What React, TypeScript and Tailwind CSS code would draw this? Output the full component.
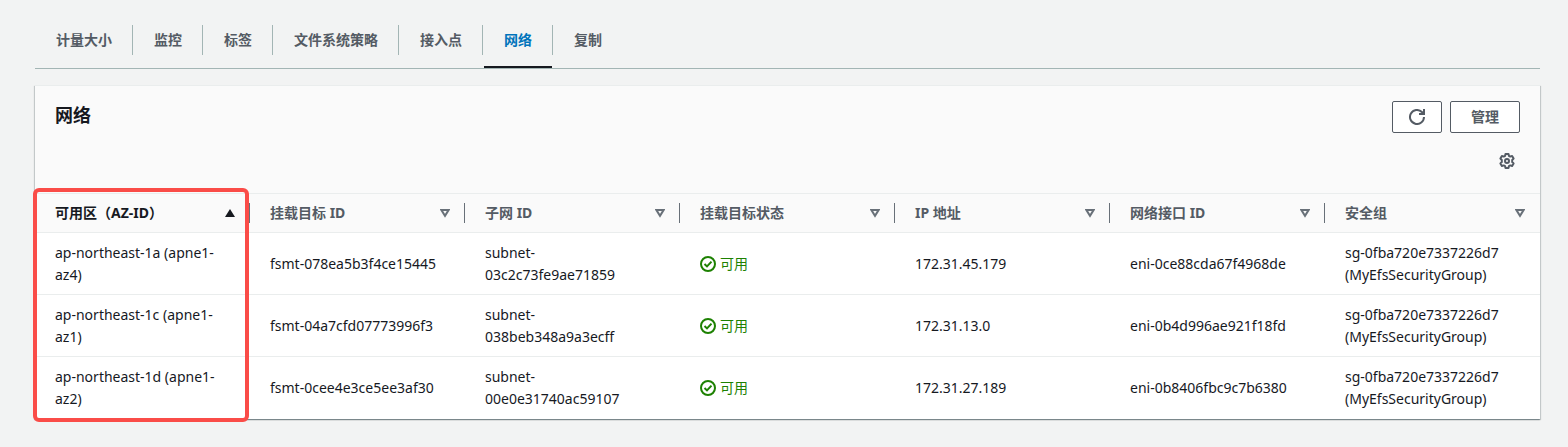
import React from 'react';
import clsx from 'clsx';

const tabs = ['计量大小', '监控', '标签', '文件系统策略', '接入点', '网络', '复制'];

const columns = ['可用区（AZ-ID）', '挂载目标 ID', '子网 ID', '挂载目标状态', 'IP 地址', '网络接口 ID', '安全组'];

const mountTargets = [
  {
    zone: 'ap-northeast-1a (apne1-az4)',
    id: 'fsmt-078ea5b3f4ce15445',
    subnet: 'subnet-03c2c73fe9ae71859',
    ip: '172.31.45.179',
    eni: 'eni-0ce88cda67f4968de',
  },
  {
    zone: 'ap-northeast-1c (apne1-az1)',
    id: 'fsmt-04a7cfd07773996f3',
    subnet: 'subnet-038beb348a9a3ecff',
    ip: '172.31.13.0',
    eni: 'eni-0b4d996ae921f18fd',
  },
  {
    zone: 'ap-northeast-1d (apne1-az2)',
    id: 'fsmt-0cee4e3ce5ee3af30',
    subnet: 'subnet-00e0e31740ac59107',
    ip: '172.31.27.189',
    eni: 'eni-0b8406fbc9c7b6380',
  },
];

function RefreshIcon() {
  return (
    <svg className="h-4 w-4" viewBox="0 0 16 16" fill="none" stroke="currentColor" strokeWidth="2" aria-hidden="true">
      <path d="M15 8a7 7 0 1 1-2.1-5L15 5" />
      <path d="M10 5h5V0" />
    </svg>
  );
}

function GearIcon() {
  return (
    <svg className="h-4 w-4" viewBox="0 0 16 16" fill="none" stroke="currentColor" strokeWidth="2" strokeLinejoin="round" aria-hidden="true">
      <path d="M6.5 1h3l.4 1.8 1.4.8 1.8-.6 1.5 2.6L13.2 7v2l1.4 1.4-1.5 2.6-1.8-.6-1.4.8-.4 1.8h-3l-.4-1.8-1.4-.8-1.8.6-1.5-2.6L2.8 9V7L1.4 5.6 2.9 3l1.8.6 1.4-.8z" />
      <circle cx="8" cy="8" r="2" />
    </svg>
  );
}

function CheckIcon() {
  return (
    <svg className="h-4 w-4 shrink-0" viewBox="0 0 16 16" fill="none" stroke="currentColor" strokeWidth="2" aria-hidden="true">
      <circle cx="8" cy="8" r="7" />
      <path d="M4.5 8 7 10.4 11.5 5.6" />
    </svg>
  );
}

function SortIcon({ active }: { active: boolean }) {
  return (
    <svg className="h-2.5 w-2.5 shrink-0" viewBox="0 0 10 10" aria-hidden="true">
      {active ? (
        <path d="M5 1l5 8H0z" fill="currentColor" />
      ) : (
        <path d="M1.4 2h7.2L5 7.8z" fill="none" stroke="#687078" strokeWidth="2" />
      )}
    </svg>
  );
}

function Tabs() {
  return (
    <nav className="flex border-b border-[#a3b5b4] pt-[25px]">
      {tabs.map((tab, index) => {
        const active = tab === '网络';
        return (
          <div key={tab} className="flex flex-col">
            <a
              href={`#tab-${index}`}
              aria-current={active ? 'page' : undefined}
              className={clsx(
                'pl-[21px] pr-5 text-sm leading-[30px] font-bold',
                index < tabs.length - 1 && 'border-r border-[#a3b5b4]',
                active ? 'text-[#0073bb]' : 'text-[#545b64]'
              )}
            >
              {tab}
            </a>
            <span className={clsx('mx-px mt-[11px] h-0.5', active && 'bg-[#16191f]')} />
          </div>
        );
      })}
    </nav>
  );
}

function PanelHeader() {
  return (
    <header className="border-t border-[#eaeded] bg-[#fafafa] px-5 pt-[15px] pb-6 text-[#545b64]">
      <div className="flex items-start justify-between">
        <h2 className="text-lg leading-7 font-bold text-[#16191f]">网络</h2>
        <div className="flex gap-2">
          <button
            type="button"
            aria-label="刷新"
            className="flex h-8 w-[50px] items-center justify-center rounded-xs border border-[#545b64] bg-white"
          >
            <RefreshIcon />
          </button>
          <button type="button" className="h-8 rounded-xs border border-[#545b64] bg-white px-5 text-sm font-bold">
            管理
          </button>
        </div>
      </div>
      <div className="mt-5 flex justify-end pr-[5px]">
        <button type="button" aria-label="首选项">
          <GearIcon />
        </button>
      </div>
    </header>
  );
}

function MountTargetTable() {
  return (
    <div className="relative">
      <table className="w-full table-fixed border-collapse text-left text-sm leading-[22px] text-[#16191f]">
        <thead>
          <tr className="border-y border-[#eaeded] bg-[#fafafa]">
            {columns.map((column, index) => (
              <th
                key={column}
                aria-sort={index === 0 ? 'ascending' : undefined}
                className={clsx('p-0 font-bold', index === 0 ? 'text-[#16191f]' : 'text-[#545b64]')}
              >
                <div
                  className={clsx(
                    'my-[9px] flex h-5 items-center justify-between border-r pr-3.5 pl-5',
                    index < columns.length - 1 ? 'border-[#687078]' : 'border-transparent'
                  )}
                >
                  <span>{column}</span>
                  <SortIcon active={index === 0} />
                </div>
              </th>
            ))}
          </tr>
        </thead>
        <tbody>
          {mountTargets.map((target) => (
            <tr key={target.id} className="border-b border-[#eaeded] last:border-b-white">
              <td className="px-5 pt-[9px] pb-2">{target.zone}</td>
              <td className="px-5 pt-[9px] pb-2">{target.id}</td>
              <td className="px-5 pt-[9px] pb-2">{target.subnet}</td>
              <td className="px-5 pt-[9px] pb-2">
                <span className="flex items-center gap-1 text-[#1d8102]">
                  <CheckIcon />
                  可用
                </span>
              </td>
              <td className="px-5 pt-[9px] pb-2">{target.ip}</td>
              <td className="px-5 pt-[9px] pb-2">{target.eni}</td>
              <td className="px-5 pt-[9px] pb-2">
                sg-0fba720e7337226d7
                <br />
                (MyEfsSecurityGroup)
              </td>
            </tr>
          ))}
        </tbody>
      </table>
      {/* highlight around the availability zone column */}
      <div className="pointer-events-none absolute -top-[5px] -bottom-[3px] -left-0.5 w-[calc(100%/7+1px)] rounded-md border-4 border-[#fa4c48]" />
    </div>
  );
}

function App() {
  return (
    <main className="min-h-screen bg-[#f2f3f3] pr-7 pl-[35px] font-['Noto_Sans','Noto_Sans_CJK_SC',sans-serif]">
      <Tabs />
      <section className="mt-4 bg-white shadow-[0_1px_1px_0_rgba(0,28,36,0.3),1px_1px_1px_0_rgba(0,28,36,0.15),-1px_1px_1px_0_rgba(0,28,36,0.15)]">
        <PanelHeader />
        <MountTargetTable />
      </section>
    </main>
  );
}

export default App;
